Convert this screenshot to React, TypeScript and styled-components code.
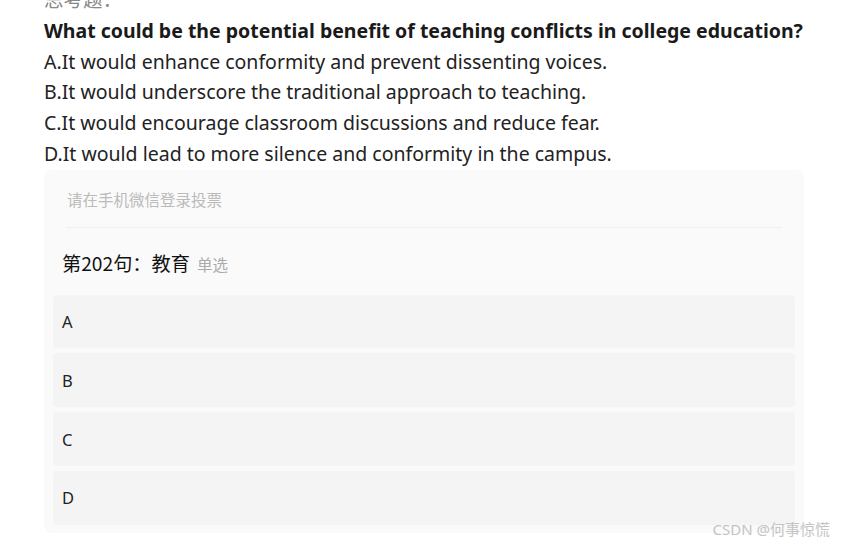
import styled, { createGlobalStyle } from "styled-components";

const GlobalStyle = createGlobalStyle`
  html, body {
    margin: 0;
    padding: 0;
    background: #fff;
    overflow: hidden;
  }
  body {
    font-family: "Noto Sans", "Noto Sans CJK SC", sans-serif;
    color: #222;
  }
`;

const options = [
  "A.It would enhance conformity and prevent dissenting voices.",
  "B.It would underscore the traditional approach to teaching.",
  "C.It would encourage classroom discussions and reduce fear.",
  "D.It would lead to more silence and conformity in the campus."
];

const choices = ["A", "B", "C", "D"];

const App = () => {
  return (
    <Page>
      <GlobalStyle />
      <Article>
        <Label>思考题：</Label>
        <Question>
          What could be the potential benefit of teaching conflicts in college education?
        </Question>
        {options.map((o) => (
          <Line key={o}>{o}</Line>
        ))}
      </Article>
      <VoteCard>
        <Notice>请在手机微信登录投票</Notice>
        <Divider />
        <VoteTitle>
          第202句：教育<Kind>单选</Kind>
        </VoteTitle>
        <ChoiceList>
          {choices.map((c) => (
            <Choice key={c}>{c}</Choice>
          ))}
        </ChoiceList>
      </VoteCard>
      <Watermark>CSDN @何事惊慌</Watermark>
    </Page>
  );
};

export default App;

const Page = styled.div`
  position: relative;
  width: 842px;
  height: 546px;
  padding-left: 44px;
  box-sizing: border-box;
  overflow: hidden;
`;

const Article = styled.div`
  margin-top: -15px;
  font-size: 19.5px;
  line-height: 30.8px;
`;

const Label = styled.div`
  color: #888;
`;

const Question = styled.div`
  font-weight: 700;
  color: #1a1a1a;
  white-space: nowrap;
`;

const Line = styled.div`
  color: #222;
  white-space: nowrap;
`;

const VoteCard = styled.div`
  width: 760px;
  margin-top: 0;
  background: #fafafa;
  border-radius: 8px;
  padding: 9px 9px 8px 9px;
  box-sizing: border-box;
`;

const Notice = styled.div`
  padding: 9px 14px 0;
  height: 48px;
  box-sizing: border-box;
  font-size: 15.5px;
  line-height: 22px;
  color: #bbb;
  font-family: "Noto Sans CJK SC", sans-serif;
`;

const Divider = styled.div`
  margin: 0 13px;
  height: 1px;
  background: #efefef;
`;

const VoteTitle = styled.div`
  display: flex;
  align-items: baseline;
  padding: 22px 9px 0;
  height: 44px;
  box-sizing: border-box;
  font-size: 19.2px;
  line-height: 26px;
  color: #111;
  font-family: "Noto Sans CJK SC", sans-serif;
`;

const Kind = styled.span`
  margin-left: 7px;
  font-size: 15.5px;
  color: #aaa;
`;

const ChoiceList = styled.div`
  display: flex;
  flex-direction: column;
  gap: 5px;
  margin-top: 23px;
`;

const Choice = styled.div`
  height: 53.7px;
  display: flex;
  align-items: center;
  padding-left: 9px;
  background: #f4f4f4;
  border-radius: 4px;
  font-size: 16.5px;
  color: #222;
`;

const Watermark = styled.div`
  position: absolute;
  right: 12px;
  bottom: 7px;
  font-size: 15px;
  color: #c4c4c4;
  font-family: "Noto Sans", "Noto Sans CJK SC", sans-serif;
`;
